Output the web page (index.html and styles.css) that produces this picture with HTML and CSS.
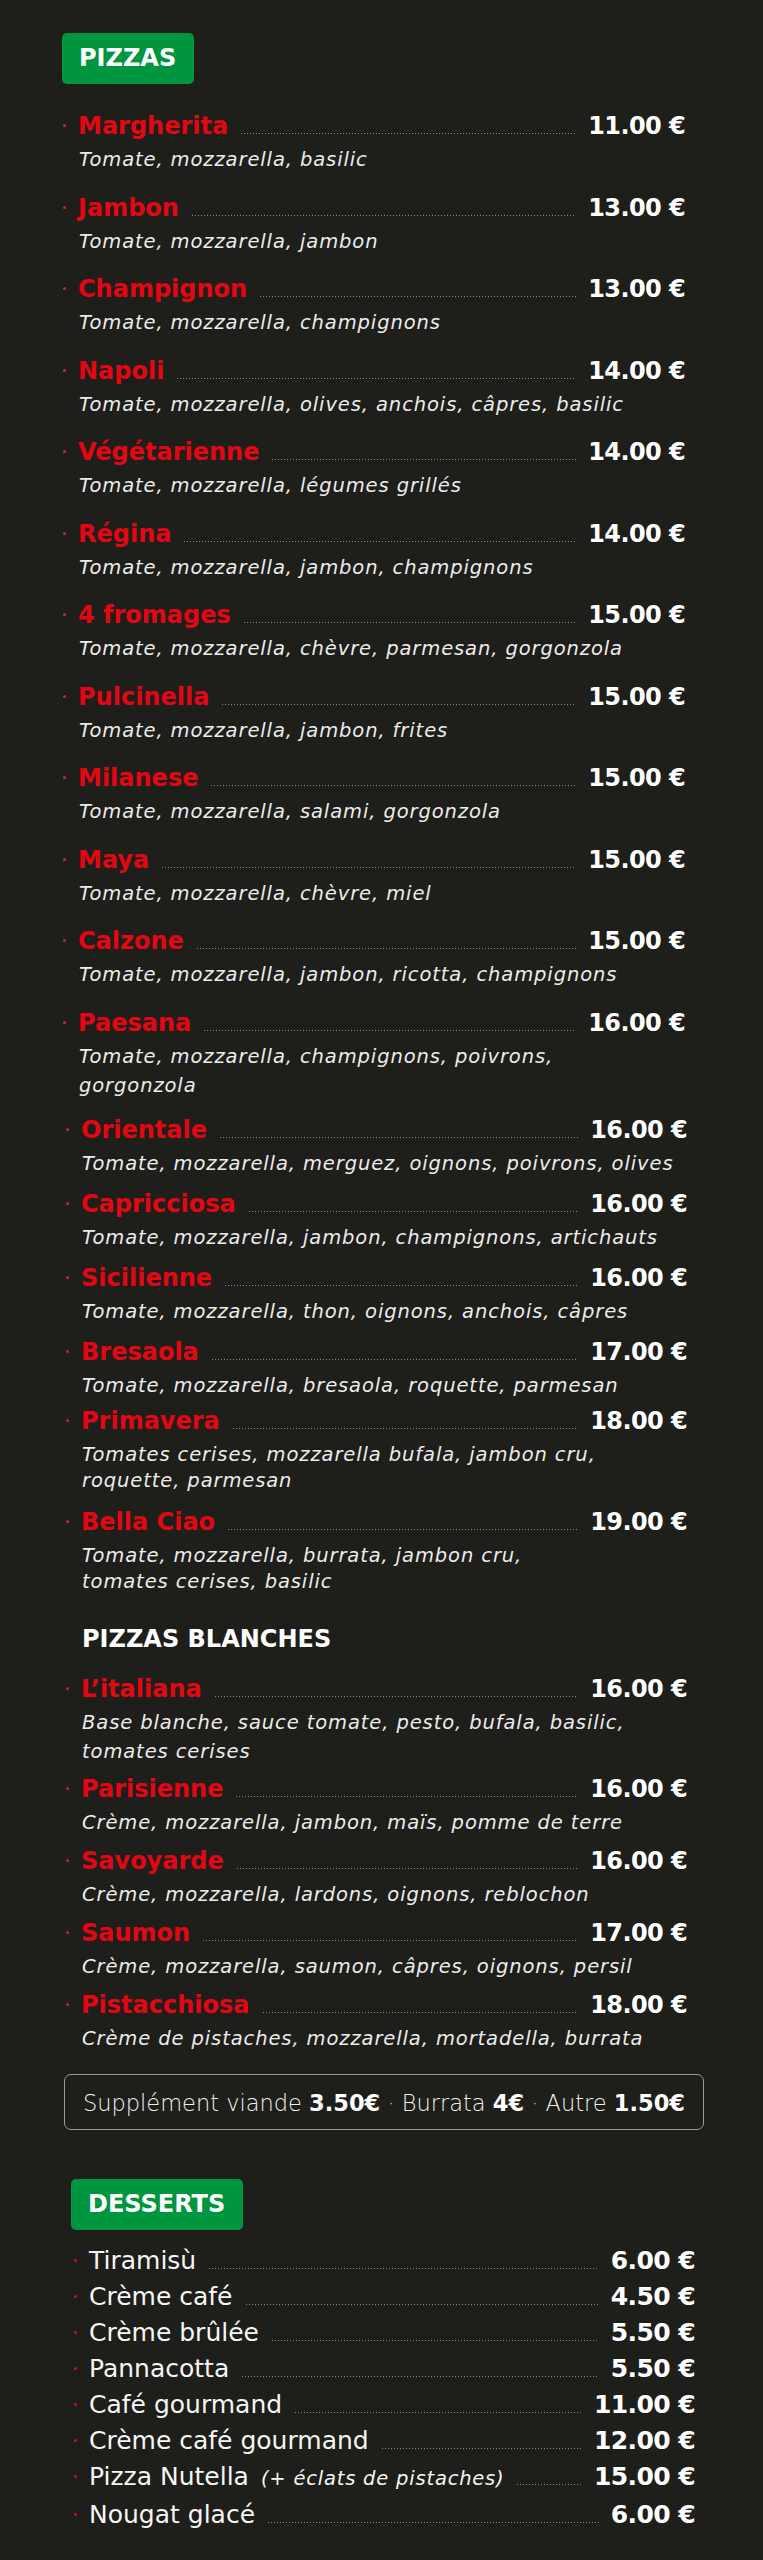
FILE: index.html
```html
<!DOCTYPE html>
<html lang="fr">
<head>
<meta charset="utf-8">
<title>Menu – Pizzas &amp; Desserts</title>
<link rel="stylesheet" href="styles.css">
</head>
<body>
<main class="menu">
  <section class="section pizzas">
    <h2 class="badge">PIZZAS</h2>
    <ul class="items grp-a">
      <li class="item"><div class="row"><span class="dot"></span><span class="name">Margherita</span><span class="leader"></span><span class="price">11.00 €</span></div><p class="desc">Tomate, mozzarella, basilic</p></li>
      <li class="item"><div class="row"><span class="dot"></span><span class="name">Jambon</span><span class="leader"></span><span class="price">13.00 €</span></div><p class="desc">Tomate, mozzarella, jambon</p></li>
      <li class="item"><div class="row"><span class="dot"></span><span class="name">Champignon</span><span class="leader"></span><span class="price">13.00 €</span></div><p class="desc">Tomate, mozzarella, champignons</p></li>
      <li class="item"><div class="row"><span class="dot"></span><span class="name">Napoli</span><span class="leader"></span><span class="price">14.00 €</span></div><p class="desc">Tomate, mozzarella, olives, anchois, câpres, basilic</p></li>
      <li class="item"><div class="row"><span class="dot"></span><span class="name">Végétarienne</span><span class="leader"></span><span class="price">14.00 €</span></div><p class="desc">Tomate, mozzarella, légumes grillés</p></li>
      <li class="item"><div class="row"><span class="dot"></span><span class="name">Régina</span><span class="leader"></span><span class="price">14.00 €</span></div><p class="desc">Tomate, mozzarella, jambon, champignons</p></li>
      <li class="item"><div class="row"><span class="dot"></span><span class="name">4 fromages</span><span class="leader"></span><span class="price">15.00 €</span></div><p class="desc">Tomate, mozzarella, chèvre, parmesan, gorgonzola</p></li>
      <li class="item"><div class="row"><span class="dot"></span><span class="name">Pulcinella</span><span class="leader"></span><span class="price">15.00 €</span></div><p class="desc">Tomate, mozzarella, jambon, frites</p></li>
      <li class="item"><div class="row"><span class="dot"></span><span class="name">Milanese</span><span class="leader"></span><span class="price">15.00 €</span></div><p class="desc">Tomate, mozzarella, salami, gorgonzola</p></li>
      <li class="item"><div class="row"><span class="dot"></span><span class="name">Maya</span><span class="leader"></span><span class="price">15.00 €</span></div><p class="desc">Tomate, mozzarella, chèvre, miel</p></li>
      <li class="item"><div class="row"><span class="dot"></span><span class="name">Calzone</span><span class="leader"></span><span class="price">15.00 €</span></div><p class="desc">Tomate, mozzarella, jambon, ricotta, champignons</p></li>
      <li class="item"><div class="row"><span class="dot"></span><span class="name">Paesana</span><span class="leader"></span><span class="price">16.00 €</span></div><p class="desc">Tomate, mozzarella, champignons, poivrons,<br>gorgonzola</p></li>
    </ul>
    <ul class="items grp-b">
      <li class="item"><div class="row"><span class="dot"></span><span class="name">Orientale</span><span class="leader"></span><span class="price">16.00 €</span></div><p class="desc">Tomate, mozzarella, merguez, oignons, poivrons, olives</p></li>
      <li class="item"><div class="row"><span class="dot"></span><span class="name">Capricciosa</span><span class="leader"></span><span class="price">16.00 €</span></div><p class="desc">Tomate, mozzarella, jambon, champignons, artichauts</p></li>
      <li class="item"><div class="row"><span class="dot"></span><span class="name">Sicilienne</span><span class="leader"></span><span class="price">16.00 €</span></div><p class="desc">Tomate, mozzarella, thon, oignons, anchois, câpres</p></li>
      <li class="item"><div class="row"><span class="dot"></span><span class="name">Bresaola</span><span class="leader"></span><span class="price">17.00 €</span></div><p class="desc">Tomate, mozzarella, bresaola, roquette, parmesan</p></li>
      <li class="item"><div class="row"><span class="dot"></span><span class="name">Primavera</span><span class="leader"></span><span class="price">18.00 €</span></div><p class="desc">Tomates cerises, mozzarella bufala, jambon cru,<br>roquette, parmesan</p></li>
      <li class="item"><div class="row"><span class="dot"></span><span class="name">Bella Ciao</span><span class="leader"></span><span class="price">19.00 €</span></div><p class="desc">Tomate, mozzarella, burrata, jambon cru,<br>tomates cerises, basilic</p></li>
    </ul>
    <h3 class="subhead">PIZZAS BLANCHES</h3>
    <ul class="items grp-c">
      <li class="item"><div class="row"><span class="dot"></span><span class="name">L’italiana</span><span class="leader"></span><span class="price">16.00 €</span></div><p class="desc">Base blanche, sauce tomate, pesto, bufala, basilic,<br>tomates cerises</p></li>
      <li class="item"><div class="row"><span class="dot"></span><span class="name">Parisienne</span><span class="leader"></span><span class="price">16.00 €</span></div><p class="desc">Crème, mozzarella, jambon, maïs, pomme de terre</p></li>
      <li class="item"><div class="row"><span class="dot"></span><span class="name">Savoyarde</span><span class="leader"></span><span class="price">16.00 €</span></div><p class="desc">Crème, mozzarella, lardons, oignons, reblochon</p></li>
      <li class="item"><div class="row"><span class="dot"></span><span class="name">Saumon</span><span class="leader"></span><span class="price">17.00 €</span></div><p class="desc">Crème, mozzarella, saumon, câpres, oignons, persil</p></li>
      <li class="item"><div class="row"><span class="dot"></span><span class="name">Pistacchiosa</span><span class="leader"></span><span class="price">18.00 €</span></div><p class="desc">Crème de pistaches, mozzarella, mortadella, burrata</p></li>
    </ul>
    <p class="supplement">Supplément viande <b>3.50€</b> <span class="sep">·</span> Burrata <b>4€</b> <span class="sep">·</span> Autre <b>1.50€</b></p>
  </section>

  <section class="section desserts">
    <h2 class="badge">DESSERTS</h2>
    <ul class="d-items">
      <li class="d-row"><span class="dot"></span><span class="d-name">Tiramisù</span><span class="leader"></span><span class="price d-price">6.00 €</span></li>
      <li class="d-row"><span class="dot"></span><span class="d-name">Crème café</span><span class="leader"></span><span class="price d-price">4.50 €</span></li>
      <li class="d-row"><span class="dot"></span><span class="d-name">Crème brûlée</span><span class="leader"></span><span class="price d-price">5.50 €</span></li>
      <li class="d-row"><span class="dot"></span><span class="d-name">Pannacotta</span><span class="leader"></span><span class="price d-price">5.50 €</span></li>
      <li class="d-row"><span class="dot"></span><span class="d-name">Café gourmand</span><span class="leader"></span><span class="price d-price">11.00 €</span></li>
      <li class="d-row"><span class="dot"></span><span class="d-name">Crème café gourmand</span><span class="leader"></span><span class="price d-price">12.00 €</span></li>
      <li class="d-row"><span class="dot"></span><span class="d-name">Pizza Nutella <em class="note">(+ éclats de pistaches)</em></span><span class="leader"></span><span class="price d-price">15.00 €</span></li>
      <li class="d-row"><span class="dot"></span><span class="d-name">Nougat glacé</span><span class="leader"></span><span class="price d-price">6.00 €</span></li>
    </ul>
  </section>
</main>
</body>
</html>
```

FILE: styles.css
```css
* {
  box-sizing: border-box;
  margin: 0;
  padding: 0;
}

html, body {
  background: #1e1e1a;
}

body {
  font-family: "DejaVu Sans", "Liberation Sans", sans-serif;
  color: #ffffff;
  min-height: 2560px;
}

.menu {
  padding: 33px 0 40px;
}

.section {
  padding: 0 78px 0 62px;
}

/* green section badges */
.badge {
  display: inline-block;
  height: 51px;
  line-height: 51px;
  padding: 0 18px 0 17px;
  background: #00953f;
  color: #ffffff;
  font-size: 24px;
  font-weight: 700;
  border-radius: 5px;
}

.items {
  list-style: none;
}

.pizzas .badge {
  margin-bottom: 27px;
}

.row {
  display: flex;
  align-items: baseline;
  line-height: 30px;
  padding-left: 1px;
}

.dot {
  flex: none;
  align-self: flex-start;
  width: 3px;
  height: 3px;
  margin: 13px 12px 0 0;
  border-radius: 50%;
  background: #d7222b;
}

.name {
  color: #e30613;
  font-size: 24px;
  font-weight: 700;
  white-space: nowrap;
}

.leader {
  flex: 1;
  height: 1px;
  margin: 0 12px 0 13px;
  background-image: linear-gradient(to right, #8a8a86 1px, transparent 1px);
  background-size: 3px 1px;
  background-repeat: repeat-x;
}

.price {
  font-size: 24px;
  font-weight: 700;
  letter-spacing: -0.6px;
  white-space: nowrap;
}

.desc {
  margin-top: 4px;
  padding-left: 17px;
  font-size: 19.5px;
  line-height: 29px;
  font-style: italic;
  font-weight: 200;
  letter-spacing: 0.9px;
  color: #ececea;
}

.grp-a .item {
  margin-bottom: 18.5px;
}

.grp-a .item:last-child {
  margin-bottom: 15px;
}

.grp-b,
.grp-c {
  margin-left: 3px;
  margin-right: -2px;
}

.grp-b .desc {
  margin-top: 6px;
  line-height: 26px;
}

.grp-b .item {
  margin-bottom: 12px;
}

.grp-b .item:nth-child(4) {
  margin-bottom: 7px;
}

.grp-b .item:nth-child(5) {
  margin-bottom: 13px;
}

.grp-b .item:last-child {
  margin-bottom: 0;
}

.subhead {
  margin: 29px 0 20px;
  padding-left: 20px;
  font-size: 24px;
  line-height: 30px;
  font-weight: 700;
}

.grp-c .item {
  margin-bottom: 9px;
}

.grp-c .item:first-child {
  margin-bottom: 8px;
}

.supplement {
  margin: 21px -19px 0 2px;
  height: 56px;
  padding: 15px 18px 0;
  border: 1px solid #9a9a96;
  border-radius: 7px;
  font-size: 22.5px;
  line-height: 26px;
  font-weight: 300;
  color: #f0f0ee;
  white-space: nowrap;
}

.supplement b {
  font-weight: 700;
  color: #ffffff;
}

.sep {
  color: #cfcfcc;
}

/* desserts */
.desserts .badge {
  margin: 49px 0 13px 9px;
}

.d-items {
  list-style: none;
  margin: 0 -10px 0 12px;
}

.d-row {
  display: flex;
  align-items: baseline;
  line-height: 36px;
}

.d-row .dot {
  margin-top: 16px;
  background: #e30613;
}

.d-name {
  font-size: 25px;
  font-weight: 400;
  color: #f6f6f4;
  white-space: nowrap;
}

.note {
  margin-left: 4px;
  font-size: 19.5px;
  font-style: italic;
  font-weight: 200;
  letter-spacing: 0.8px;
}

.d-price {
  font-size: 25px;
}
```
